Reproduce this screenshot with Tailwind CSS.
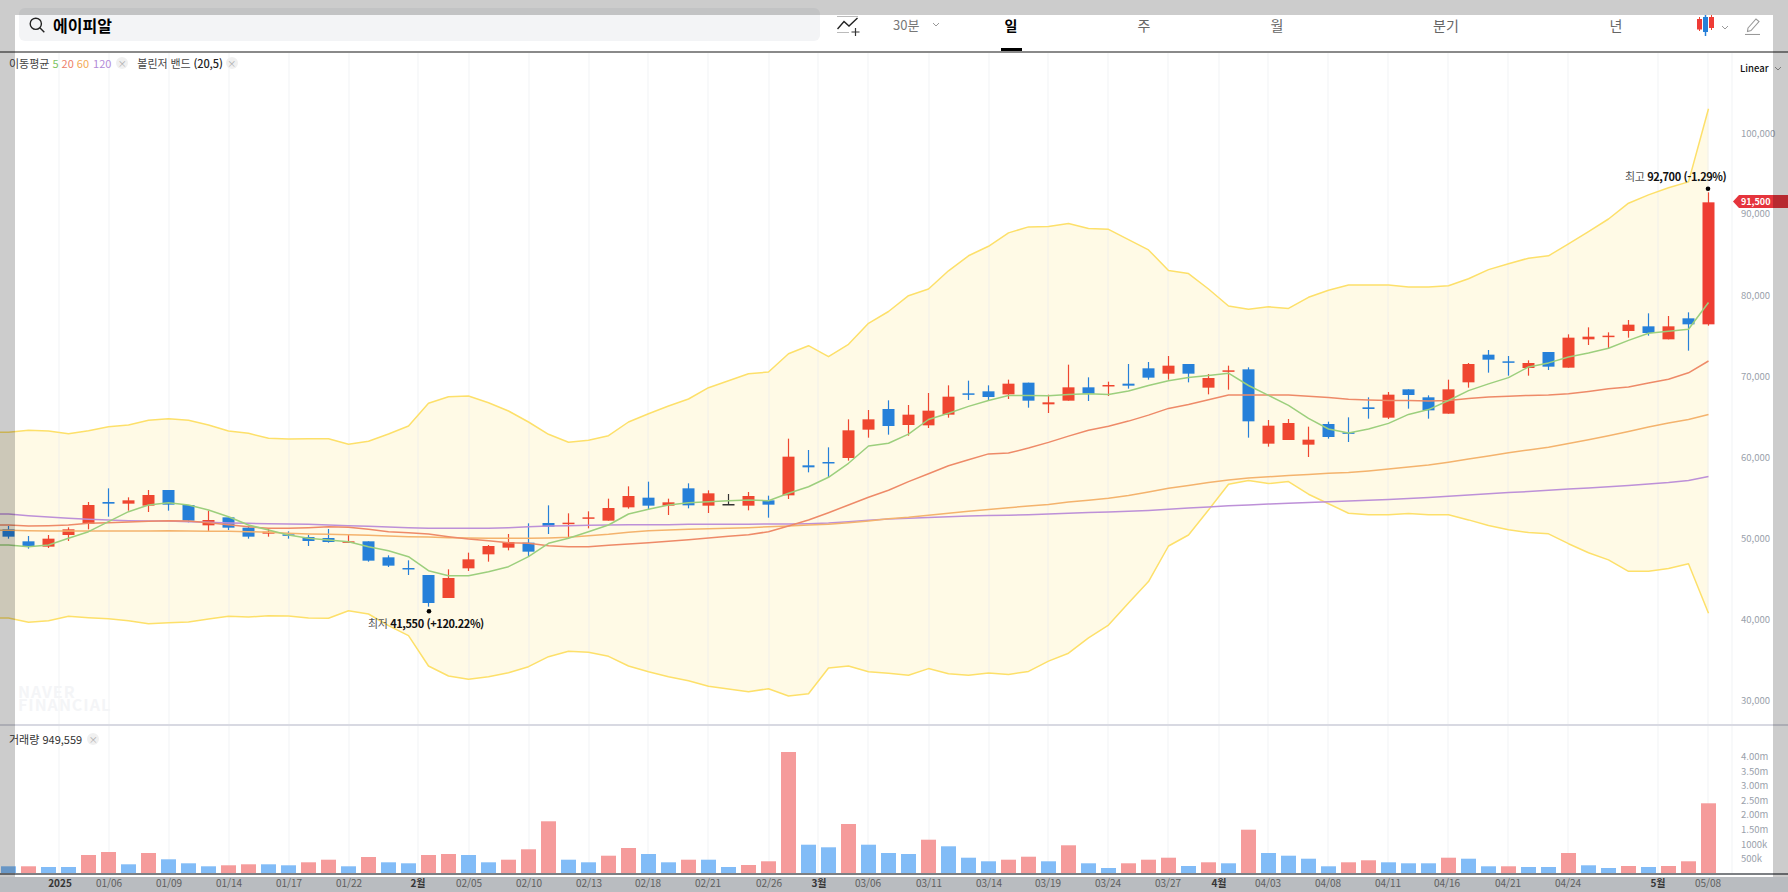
<!DOCTYPE html>
<html lang="ko">
  <head>
    <meta charset="UTF-8" />
    <script src="https://cdn.jsdelivr.net/npm/@tailwindcss/browser@4"></script>
    <title>에이피알 차트</title>
  </head>
  <body class="bg-white overflow-hidden font-['Noto_Sans_CJK_KR','Noto_Sans',sans-serif]">
    <div class="relative flex h-[892px] w-[1788px] flex-col overflow-hidden">
      <!-- header -->
      <header class="flex h-[53px] shrink-0 border-b-2 border-[#8a8a8a] bg-white">
        <div class="ml-[19px] mt-2 flex h-[33px] w-[801px] items-center rounded-md bg-[#f3f4f6] pl-[10px] pt-[1px]">
          <svg class="h-[16px] w-[16px]" viewBox="0 0 16 16" fill="none" stroke="#222" stroke-width="1.4">
            <circle cx="6.8" cy="6.8" r="5.6" />
            <path d="M10.8 10.8 15.3 15.3" />
          </svg>
          <span class="ml-[8px] text-base leading-none font-bold text-black">에이피알</span>
        </div>
        <svg class="ml-[17px] mt-[15px] h-[22px] w-[25px]" viewBox="0 0 25 22" fill="none">
          <path d="M0 1.5H21M0 17.5H12" stroke="#bbb" stroke-width="1" />
          <path d="M0.5 14 7 6.5 12 11 20.5 3" stroke="#222" stroke-width="1.4" />
          <path d="M18.5 13V21M14.5 17H22.5" stroke="#333" stroke-width="1.2" />
        </svg>
        <div class="ml-[31px] flex h-[51px] w-[50px] items-center gap-[13px] pb-[2px] text-[13px] text-[#777]">
          <span>30분</span>
          <svg class="h-[5px] w-[8px] shrink-0" viewBox="0 0 8 5" fill="none" stroke="#999"><path d="M1 1 4 4 7 1" /></svg>
        </div>
        <nav class="ml-[2px] flex text-sm text-[#666]">
          <a class="relative flex h-[51px] w-[132px] items-center justify-center pb-[2px] font-bold text-black">
            일
            <span class="absolute bottom-0 left-[56px] h-[3px] w-[21px] bg-black"></span>
          </a>
          <a class="flex h-[51px] w-[134px] items-center justify-center pb-[2px]">주</a>
          <a class="flex h-[51px] w-[132px] items-center justify-center pb-[2px]">월</a>
          <a class="flex h-[51px] w-[206px] items-center justify-center pb-[2px]">분기</a>
          <a class="flex h-[51px] w-[134px] items-center justify-center pb-[2px]">년</a>
        </nav>
        <svg class="ml-[13px] mt-[15px] h-[21px] w-[19px]" viewBox="0 0 19 21">
          <path d="M3.5 2V16" stroke="#ef4630" />
          <rect x="1" y="4" width="5" height="10.5" fill="#ef3b36" />
          <path d="M9.5 0V21" stroke="#2680d9" stroke-width="1.5" />
          <rect x="7" y="2" width="5" height="15" fill="#2680d9" />
          <path d="M15.5 0V15" stroke="#ef4630" />
          <rect x="13" y="2" width="5" height="11" fill="#ef3b36" />
        </svg>
        <svg class="ml-[6px] mt-[25px] h-[5px] w-[8px]" viewBox="0 0 8 5" fill="none" stroke="#999"><path d="M1 1 4 4 7 1" /></svg>
        <svg class="ml-[16px] mt-[17px] h-[18px] w-[16px]" viewBox="0 0 16 18" fill="none" stroke="#999" stroke-width="1.1">
          <path d="M3 11 11 2 14 4.5 6 13.5 2.5 14.5Z" />
          <path d="M0 17.5H15" />
        </svg>
      </header>

      <!-- price pane -->
      <section class="relative h-[671px] shrink-0">
        <svg id="price" class="block h-full w-full" viewBox="0 53 1788 671"></svg>
        <div class="absolute left-[9px] top-[2px] flex h-[16px] items-center text-[11px] text-[#444]">
          <span>이동평균</span>
          <span class="ml-[3px] text-[#7cc35f]">5</span>
          <span class="ml-[3px] text-[#ee7e6a]">20</span>
          <span class="ml-[3px] text-[#f3a955]">60</span>
          <span class="ml-[4px] text-[#b38ad8]">120</span>
          <span class="ml-[5px] flex h-[12px] w-[12px] items-center justify-center rounded-full bg-[#f0f0f0] text-[9px] leading-none text-[#aaa]">×</span>
          <span class="ml-[9px] tracking-[-0.1px]">볼린저 밴드 <b class="font-medium text-[#222]">(20,5)</b></span>
          <span class="ml-[3px] flex h-[12px] w-[12px] items-center justify-center rounded-full bg-[#f0f0f0] text-[9px] leading-none text-[#aaa]">×</span>
        </div>
        <div class="absolute left-[1740px] top-[7px] flex h-[16px] items-center gap-[5px] text-[9.5px] font-medium text-[#111]">
          Linear
          <svg class="h-[5px] w-[8px]" viewBox="0 0 8 5" fill="none" stroke="#999"><path d="M1 1 4 4 7 1" /></svg>
        </div>
      </section>

      <div class="h-[2px] shrink-0 bg-[#d8d9e2]"></div>

      <!-- volume pane -->
      <section class="relative h-[150px] shrink-0">
        <svg id="volume" class="block h-full w-full" viewBox="0 726 1788 150"></svg>
        <div class="absolute left-[9px] top-[5px] flex h-[16px] items-center text-[11px] text-[#333]">
          <span>거래량 949,559</span>
          <span class="ml-[5px] flex h-[12px] w-[12px] items-center justify-center rounded-full bg-[#f0f0f0] text-[9px] leading-none text-[#aaa]">×</span>
        </div>
      </section>

      <div class="h-px shrink-0 bg-white"></div>
      <svg id="dates" class="-mt-[3px] block h-[18px] w-full shrink-0" viewBox="0 874 1788 18"></svg>

      <!-- dimmed layer round the chart window -->
      <div class="absolute inset-x-0 top-0 h-[15px] bg-black/20"></div>
      <div class="absolute inset-x-0 bottom-0 h-[15px] bg-black/20"></div>
      <div class="absolute bottom-[15px] left-0 top-[15px] w-[15px] bg-black/20"></div>
      <div class="absolute bottom-[15px] right-0 top-[15px] w-[15px] bg-black/20"></div>
    </div>

    <script>
      const NS = 'http://www.w3.org/2000/svg'
      const X = (i) => 8.5 + 20 * i
      const RED = '#ef4630'
      const BLUE = '#2680d9'
      const colors = { r: RED, b: BLUE, k: '#333' }

      // grid positions, shared by both panes
      const grid = [59, 109, 169, 229, 289, 349, 418, 469, 529, 589, 648, 708, 769, 818, 868, 929, 989, 1048, 1108, 1168, 1219, 1268, 1328, 1388, 1448, 1508, 1568, 1658, 1708, 1732]

      // type, body top, body bottom, wick top, wick bottom (read off 3x crops, offset below)
      const candleGroups = [
        [440, [
          ['b',268,290,258,296],['b',304,320,288,326],['r',296,320,285,324],['r',268,285,262,303],['r',195,252,186,268],
          ['b',186,191,145,230],['r',181,191,172,212],['r',165,197,150,216],['b',150,194,150,212],['b',195,242,195,247],
          ['r',240,256,212,273],['b',232,263,232,270],['b',263,290,257,296],['r',275,281,267,290],['b',283,287,274,296],
          ['b',291,303,285,318],['b',294,306,267,308],['r',304,306,285,308],['b',304,362,304,365],['b',352,377,346,381],
          ['b',384,387,361,405],['b',405,489,405,500],['r',414,474,388,474],['r',358,385,338,393],['r',318,343,315,365],
          ['r',306,323,282,331],['b',308,335,250,350],['b',249,260,196,282],['r',248,250,220,292],['r',232,236,214,265],
        ]],
        [360, [
          ['r',444,482,416,482],['r',408,442,379,446],['b',413,437,365,450],['r',427,437,416,465],['b',385,436,370,445],
          ['r',400,437,391,459],['k',432,434,402,434],['r',408,437,396,451],['b',421,434,407,473],['r',290,406,236,417],
          ['b',316,322,270,337],['b',306,308,262,352],['r',211,294,178,302],['r',178,209,150,233],['b',147,198,121,224],
          ['r',164,195,135,227],['r',152,196,99,204],['r',110,164,76,173],['b',100,103,62,120],['b',94,111,76,123],
          ['r',71,103,59,117],['b',68,122,68,143],['r',127,133,104,159],['r',82,122,14,122],['b',82,101,52,123],
        ]],
        [340, [
          ['r',135,137,125,168],['b',131,137,72,146],['b',85,113,66,119],['r',77,101,48,119],['b',72,101,72,127],
          ['r',114,143,102,163],['r',91,95,77,149],['b',88,244,82,293],['r',257,311,240,320],['r',249,300,237,300],
          ['r',299,314,260,351],['b',252,291,245,296],['b',277,281,232,306],['b',202,207,172,236],['r',164,233,156,237],
          ['b',148,165,148,206],['b',172,211,166,236],['r',148,221,119,221],['r',72,127,69,143],['b',44,59,30,98],
          ['b',64,67,48,107],['r',69,84,61,107],['b',36,80,36,90],
        ]],
        [90, [
          ['r',743,833,733,833],['r',740,748,712,765],['r',737,741,727,775],['r',704,723,690,743],['b',709,729,670,737],
          ['r',709,748,678,748],['b',685,703,667,782],['r',337,703,307,707],
        ]],
      ]
      const candles = candleGroups.flatMap(([off, rows]) =>
        rows.map(([t, a, b, c, d]) => [t, off + a / 3, off + b / 3, off + c / 3, off + d / 3])
      )

      // line series: first 44 points from one crop, last 42 from the other
      const line = (left, right) => [...left.map((v) => 210 + v / 3), ...right.map((v) => 100 + v / 2.529)]

      const upper = line(
        [667,661,663,671,662,650,645,631,626,631,645,663,670,685,687,686,686,703,694,672,648,580,560,558,578,603,636,673,697,691,677,636,611,588,567,533,512,491,486,431,407,440,403,340],
        [535,495,478,432,394,370,336,321,320,312,325,327,353,379,431,439,478,521,529,523,527,499,481,468,468,468,473,473,470,452,429,414,400,394,364,333,301,261,240,222,207,22]
      )
      const lower = line(
        [1224,1237,1232,1219,1223,1226,1232,1241,1238,1236,1227,1219,1221,1217,1218,1224,1225,1202,1212,1247,1277,1368,1398,1408,1400,1388,1370,1340,1324,1327,1339,1368,1385,1400,1412,1429,1437,1445,1436,1458,1451,1374,1368,1385],
        [1450,1455,1438,1451,1455,1449,1453,1445,1419,1399,1360,1328,1272,1218,1128,1100,1037,972,962,970,965,997,1021,1045,1049,1049,1046,1049,1049,1062,1076,1087,1094,1097,1122,1145,1163,1192,1192,1185,1173,1298]
      )
      const ma5 = line(
        [1005,1010,1005,985,965,935,905,885,878,885,900,920,945,960,975,985,990,995,1010,1022,1040,1082,1097,1097,1085,1070,1040,1000,985,965,945,912,898,885,878,875,872,870,872,850,830,802,760,708],
        [868,845,808,792,775,760,747,747,748,745,743,745,736,722,710,702,697,691,722,747,772,805,832,842,832,818,795,783,760,735,718,702,675,665,650,640,628,608,590,585,580,512]
      )
      const ma20 = line(
        [945,948,947,945,940,938,936,934,932,933,938,944,950,955,955,953,950,952,958,965,968,972,980,987,992,998,1000,1007,1010,1010,1006,1002,998,994,989,984,979,974,965,948,930,908,885,862],
        [987,965,945,925,910,895,893,880,866,850,835,825,812,797,780,770,758,746,746,746,746,749,752,757,759,760,760,761,760,755,751,749,747,746,743,737,730,726,716,706,690,660]
      )
      const ma60 = line(
        [961,962,963,963,963,963,963,963,962,963,964,964,965,967,970,972,973,974,976,978,980,981,983,984,985,985,985,984,982,977,973,967,962,960,958,956,955,953,950,948,945,943,938,933],
        [1059,1055,1050,1045,1040,1036,1031,1027,1023,1017,1012,1007,1000,991,982,975,967,961,956,953,950,947,944,942,938,933,928,923,916,908,900,892,885,878,869,859,849,838,827,817,808,795]
      )
      const ma120 = line(
        [912,917,921,925,928,930,932,933,933,935,937,939,940,941,942,943,945,947,949,951,953,955,955,955,955,953,950,948,947,946,945,944,944,944,943,943,943,943,942,942,941,939,935,931],
        [1060,1058,1056,1054,1052,1051,1050,1049,1047,1045,1043,1042,1040,1038,1035,1032,1029,1026,1024,1022,1020,1018,1016,1014,1012,1010,1008,1005,1002,999,996,993,990,987,984,981,978,975,971,967,962,952]
      )

      // t: r or b, h: bar height in px
      const volumes = [
        ['b',6.7],['r',6.7],['b',6],['b',6],['r',18],['r',21],['b',8.7],['r',20],['b',13.7],['b',9.7],
        ['b',6.7],['r',7.7],['r',8.7],['b',8.7],['b',7.7],['r',10.7],['r',13.3],['b',6.7],['r',16],['b',10.7],
        ['b',9.7],['r',18],['r',19],['b',18],['b',10.7],['r',13.3],['r',23.7],['r',51.7],['b',13.3],['b',10.7],
        ['r',17.3],['r',25],['b',19],['b',10.7],['r',13.3],['b',13.3],['b',6],['r',8],['r',11.7],['r',121],
        ['b',28.3],['b',25.7],['r',49],['b',28.3],['b',20],['b',19],['r',33.3],['b',26.7],['b',15.3],['b',11.7],
        ['r',13.3],['r',16.3],['b',11.7],['r',27.7],['b',9.7],['b',5],['r',9.7],['r',13.3],['r',15.3],['b',7],
        ['r',10.7],['b',9.7],['r',43.3],['b',20],['b',17.3],['b',14.3],['b',6.7],['r',10.7],['r',12.7],['b',10.7],
        ['b',9.7],['b',9.7],['r',15.3],['b',14.3],['b',6.7],['r',6.7],['b',6],['b',6],['r',20],['b',7.7],
        ['b',5],['r',7],['b',6],['r',7],['r',11.7],['r',69.7],
      ]

      const dateLabels = [
        ['2025',60,1],['01/06',109],['01/09',169],['01/14',229],['01/17',289],['01/22',349],['2월',418,1],['02/05',469],['02/10',529],['02/13',589],
        ['02/18',648],['02/21',708],['02/26',769],['3월',819,1],['03/06',868],['03/11',929],['03/14',989],['03/19',1048],['03/24',1108],['03/27',1168],
        ['4월',1219,1],['04/03',1268],['04/08',1328],['04/11',1388],['04/16',1447],['04/21',1508],['04/24',1568],['5월',1658,1],['05/08',1708],
      ]

      function add(parent, tag, attrs, text) {
        const el = document.createElementNS(NS, tag)
        Object.keys(attrs).forEach((k) => el.setAttribute(k, attrs[k]))
        if (text) el.textContent = text
        parent.appendChild(el)
        return el
      }

      const pts = (ys) => [[0, ys[0]], ...ys.map((y, i) => [X(i), y])]
      const pathOf = (ys) => pts(ys).map(([x, y]) => `${x},${y.toFixed(1)}`).join(' ')

      function polyline(svg, ys, color, width) {
        add(svg, 'polyline', { points: pathOf(ys), fill: 'none', stroke: color, 'stroke-width': width, 'stroke-linejoin': 'round' })
      }

      // price pane
      const price = document.getElementById('price')
      const band = pts(upper).concat(pts(lower).reverse()).map(([x, y]) => `${x},${y.toFixed(1)}`).join(' ')
      add(price, 'polygon', { points: band, fill: '#fffae6' })
      grid.forEach((x) => add(price, 'path', { d: `M${x} 53V724`, stroke: '#e8eaec', 'stroke-width': 1, 'stroke-opacity': 0.55 }))
      polyline(price, upper, '#fde06a', 1.5)
      polyline(price, lower, '#fde06a', 1.5)

      candles.forEach(([t, top, bottom, wt, wb], i) => {
        const x = X(i)
        add(price, 'path', { d: `M${x} ${wt}V${wb}`, stroke: colors[t], 'stroke-width': 1.2 })
        add(price, 'rect', { x: x - 6, y: top, width: 12, height: Math.max(bottom - top, 1.5), fill: i === 85 ? '#ee3d33' : colors[t] })
      })

      polyline(price, ma120, '#bd90d8', 1.5)
      polyline(price, ma60, '#f4b36d', 1.5)
      polyline(price, ma20, '#ee8a68', 1.5)
      polyline(price, ma5, '#9ccf7d', 1.5)

      // high / low markers
      add(price, 'circle', { cx: 1708, cy: 188.7, r: 2.3, fill: '#000' })
      add(price, 'circle', { cx: 429, cy: 611.3, r: 2.3, fill: '#000' })
      const high = add(price, 'text', { x: 1625, y: 181, class: 'text-[11px] font-semibold tracking-[-0.4px] fill-[#111]' })
      add(high, 'tspan', { class: 'fill-[#555] font-normal' }, '최고 ')
      add(high, 'tspan', {}, '92,700 (-1.29%)')
      const low = add(price, 'text', { x: 368, y: 628, class: 'text-[11px] font-semibold tracking-[-0.4px] fill-[#111]' })
      add(low, 'tspan', { class: 'fill-[#555] font-normal' }, '최저 ')
      add(low, 'tspan', {}, '41,550 (+120.22%)')

      // price axis
      ;[[100000, 133], [90000, 213], [80000, 295], [70000, 376], [60000, 457], [50000, 538], [40000, 619], [30000, 700]].forEach(([p, y]) => {
        add(price, 'text', { x: 1741, y: y + 3.5, class: 'text-[9.5px] fill-[#9aa1ab]' }, p.toLocaleString('en-US'))
      })
      add(price, 'polygon', { points: '1733,201.5 1739,195 1788,195 1788,208 1739,208', fill: '#e5343c' })
      add(price, 'text', { x: 1741, y: 205, class: 'text-[9px] font-semibold fill-white' }, '91,500')

      // watermark
      add(price, 'text', { x: 18, y: 698, class: 'text-[16px] font-bold tracking-[1px] fill-[#f4f5f7]' }, 'NAVER')
      add(price, 'text', { x: 18, y: 711, class: 'text-[16px] font-bold tracking-[1px] fill-[#f4f5f7]' }, 'FINANCIAL')

      // volume pane
      const volume = document.getElementById('volume')
      grid.forEach((x) => add(volume, 'path', { d: `M${x} 726V873`, stroke: '#e8eaec', 'stroke-width': 1, 'stroke-opacity': 0.55 }))
      volumes.forEach(([t, h], i) => {
        add(volume, 'rect', { x: X(i) - 7.5, y: 873 - h, width: 15, height: h, fill: t === 'r' ? '#f59b9b' : '#82bcf7' })
      })
      add(volume, 'path', { d: 'M0 874H1788', stroke: '#7d8084', 'stroke-width': 2 })
      ;[['4.00m', 756], ['3.50m', 771], ['3.00m', 785], ['2.50m', 800], ['2.00m', 814], ['1.50m', 829], ['1000k', 844], ['500k', 858]].forEach(([t, y]) => {
        add(volume, 'text', { x: 1741, y: y + 3.5, class: 'text-[9.5px] fill-[#9aa1ab]' }, t)
      })

      // date axis
      const dates = document.getElementById('dates')
      add(dates, 'rect', { x: 0, y: 877, width: 1788, height: 15, fill: '#e8ebf0' })
      dateLabels.forEach(([t, x, bold]) => {
        add(dates, 'text', {
          x,
          y: 887,
          'text-anchor': 'middle',
          class: bold ? 'text-[10px] font-bold fill-[#444]' : 'text-[10px] fill-[#777]',
        }, t)
      })
    </script>
  </body>
</html>
